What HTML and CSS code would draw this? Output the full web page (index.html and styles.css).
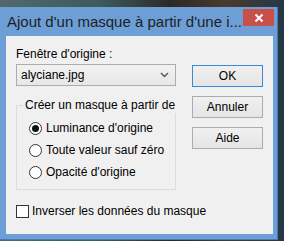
FILE: index.html
```html
<!DOCTYPE html>
<html lang="fr">
<head>
    <meta charset="UTF-8">
    <title>Ajout d'un masque à partir d'une image</title>
    <link rel="stylesheet" href="styles.css">
</head>
<body>
    <div class="window">
        <div class="titlebar">
            <span class="title">Ajout d'un masque à partir d'une i...</span>
            <span class="close">
                <svg width="10" height="10" viewBox="0 0 10 10"><path d="M1.5 1.5 L8.5 8.5 M8.5 1.5 L1.5 8.5" stroke="#fff" stroke-width="2"/></svg>
            </span>
        </div>
        <div class="client">
            <div class="left">
                <div class="label">Fenêtre d'origine :</div>
                <div class="select">
                    <span>alyciane.jpg</span>
                    <svg width="9" height="6" viewBox="0 0 9 6"><path d="M1 1 L4.5 4.5 L8 1" stroke="#555" stroke-width="1.4" fill="none"/></svg>
                </div>
                <fieldset class="group">
                    <legend>Créer un masque à partir de</legend>
                    <div class="option"><span class="radio on"></span>Luminance d'origine</div>
                    <div class="option"><span class="radio"></span>Toute valeur sauf zéro</div>
                    <div class="option"><span class="radio"></span>Opacité d'origine</div>
                </fieldset>
                <div class="check-row"><span class="checkbox"></span>Inverser les données du masque</div>
            </div>
            <div class="buttons">
                <div class="btn default">OK</div>
                <div class="btn">Annuler</div>
                <div class="btn">Aide</div>
            </div>
        </div>
    </div>
</body>
</html>
```

FILE: styles.css
```css
body {
    margin: 0;
    height: 241px;
    overflow: hidden;
    font-family: "Liberation Sans", Arial, sans-serif;
    background: linear-gradient(90deg, #51696a 0%, #3f5a5c 35%, #2c2a28 60%, #4a3a2e 80%, #233848 100%);
}
.window {
    margin-top: 7px;
    width: 278px;
    box-sizing: border-box;
    padding: 0 4px 5px 6px;
    background: #6d9ed6;
    border-right: 1px solid #4b78ad;
    border-bottom: 1px solid #4b78ad;
}
.titlebar {
    height: 29px;
    display: flex;
    align-items: flex-start;
}
.title {
    margin-top: 5px;
    margin-left: 1px;
    font-size: 15px;
    line-height: 20px;
    color: #1e1e1e;
    white-space: nowrap;
}
.close {
    margin-left: auto;
    margin-top: 2px;
    margin-right: -1px;
    width: 31px;
    height: 17px;
    flex-shrink: 0;
    background: #c7504b;
    display: flex;
    align-items: center;
    justify-content: center;
}
.client {
    height: 198px;
    box-sizing: border-box;
    background: #f0f0f0;
    display: flex;
    padding: 10px 0 0 10px;
    font-size: 12px;
    color: #000;
}
.left { width: 160px; white-space: nowrap; }
.label { line-height: 16px; margin-bottom: 2px; }
.select {
    height: 22px;
    box-sizing: border-box;
    border: 1px solid #acacac;
    background: linear-gradient(#f2f2f2, #e7e7e7);
    display: flex;
    align-items: center;
    justify-content: space-between;
    padding: 0 6px 0 4px;
}
.group {
    margin: 11px 0 0 0;
    padding: 4px 0 6px 6px;
    border: 1px solid #dcdcdc;
    min-width: 0;
}
.group legend {
    padding: 0 2px;
    margin-left: 0;
    line-height: 16px;
}
.option {
    height: 22px;
    display: flex;
    align-items: center;
    padding-left: 6px;
}
.radio {
    width: 13px;
    height: 13px;
    flex-shrink: 0;
    box-sizing: border-box;
    border: 1px solid #333;
    border-radius: 50%;
    background: #fff;
    margin-right: 4px;
    display: flex;
    align-items: center;
    justify-content: center;
}
.radio.on::after {
    content: "";
    width: 7px;
    height: 7px;
    border-radius: 50%;
    background: #111;
}
.check-row {
    margin-top: 14px;
    display: flex;
    align-items: center;
}
.checkbox {
    width: 13px;
    height: 13px;
    flex-shrink: 0;
    box-sizing: border-box;
    border: 1px solid #333;
    background: #fff;
    margin-right: 3px;
}
.buttons {
    margin-left: 16px;
    padding-top: 19px;
    display: flex;
    flex-direction: column;
    gap: 9px;
}
.btn {
    width: 71px;
    height: 22px;
    box-sizing: border-box;
    border: 1px solid #acacac;
    background: linear-gradient(#f0f0f0, #e5e5e5);
    text-align: center;
    line-height: 20px;
}
.btn.default { border-color: #3c8ad6; }
```
